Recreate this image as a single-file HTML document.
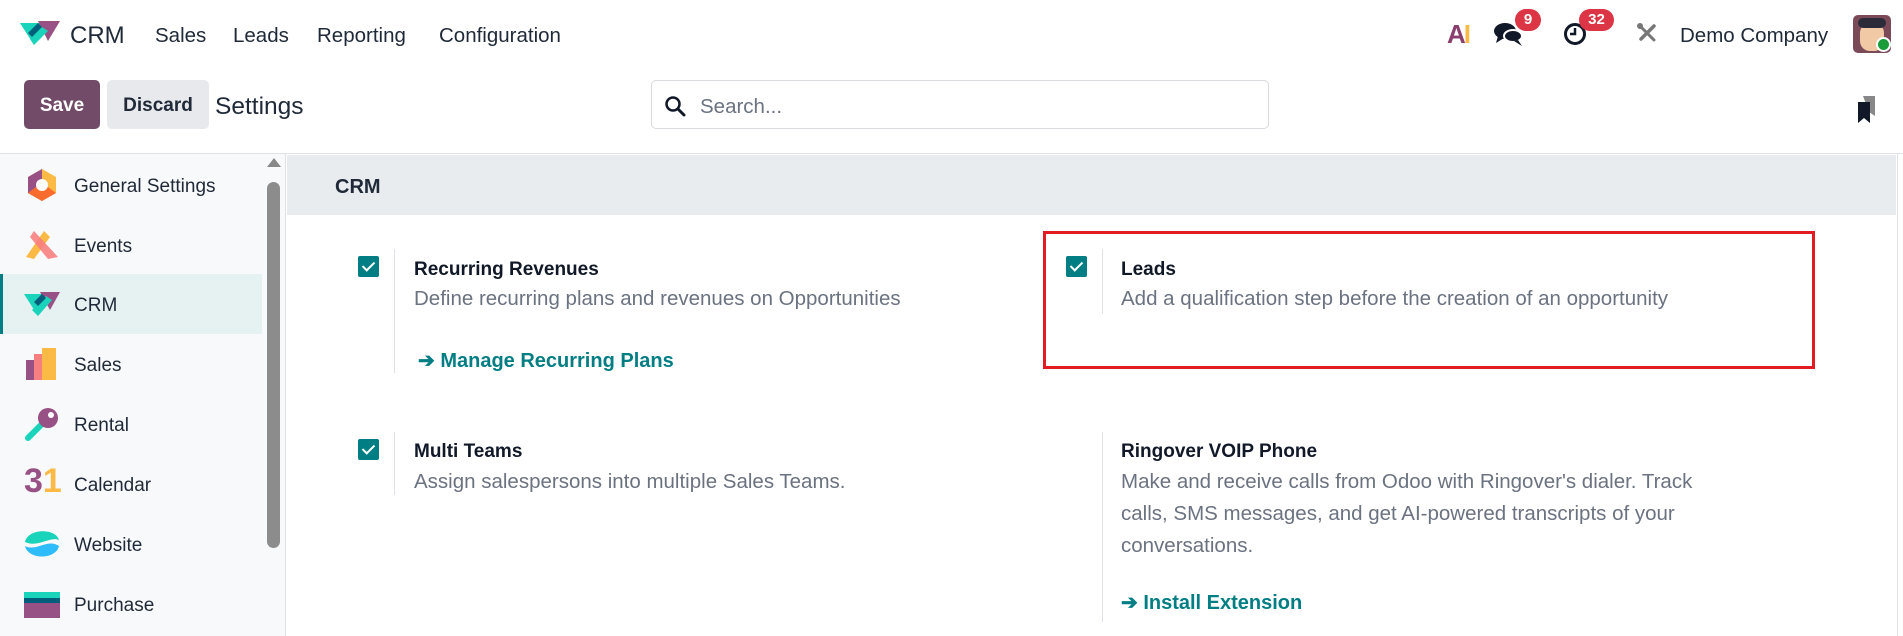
<!DOCTYPE html>
<html><head><meta charset="utf-8">
<style>
*{box-sizing:border-box;margin:0;padding:0}
body{width:1903px;height:636px;overflow:hidden;background:#fff;font-family:"Liberation Sans",sans-serif;color:#212529;position:relative}
.a{position:absolute;white-space:nowrap}
.nav{font-size:20.5px;color:#1f2937;top:24px}
.side{position:absolute;left:0;top:154px;width:286px;height:482px;background:#f8f9fa;border-right:1px solid #dee2e6}
.item{position:absolute;left:0;width:262px;height:60px;font-size:19px;color:#1f2937}
.item span{position:absolute;left:74px;top:21px}
.item svg{position:absolute;left:24px;top:12px}
.cb{position:absolute;width:21px;height:21px;background:#017e84;border-radius:2px}
.cb:after{content:"";position:absolute;left:7px;top:3px;width:5px;height:10px;border:solid #fff;border-width:0 2.5px 2.5px 0;transform:rotate(45deg)}
.vl{position:absolute;width:1px;background:#dee2e6}
.t{position:absolute;font-size:19px;font-weight:bold;color:#111827;white-space:nowrap}
.d{position:absolute;font-size:20.5px;color:#6b7280;white-space:nowrap;line-height:32px}
.lk{position:absolute;font-size:20px;font-weight:bold;color:#017e84;white-space:nowrap}
.badge{position:absolute;background:#dc3545;color:#fff;font-size:15px;font-weight:bold;border-radius:11px;height:22px;line-height:22px;text-align:center}
</style></head><body>
<svg class="a" style="left:20px;top:19px" width="40" height="30" viewBox="0 0 40 30">
<path d="M0 4 L26 4 L14 26 Z" fill="#1ad3bb"/><path d="M18 2 L40 2 L28 22 Z" fill="#985184"/><path d="M14 26 L28 12 L22 8 L10 20Z" fill="#1ad3bb"/><path d="M8 14 L18 4 L22 8 L12 18Z" fill="#005e7a"/></svg>
<div class="a" style="left:70px;top:22px;font-size:24px;color:#1f2937">CRM</div>
<div class="a nav" style="left:155px">Sales</div>
<div class="a nav" style="left:233px">Leads</div>
<div class="a nav" style="left:317px">Reporting</div>
<div class="a nav" style="left:439px">Configuration</div>
<div class="a" style="left:1447px;top:19px;font-size:26px;font-weight:bold;letter-spacing:-2px"><span style="color:#8a3f6f">A</span><span style="color:#fbb945">I</span></div>
<svg class="a" style="left:1494px;top:21px" width="30" height="26" viewBox="0 0 30 26"><ellipse cx="11" cy="10" rx="11" ry="8" fill="#111827"/><path d="M4 15 L2 22 L10 17Z" fill="#111827"/><ellipse cx="19" cy="15" rx="9" ry="6" fill="#111827" stroke="#fff" stroke-width="2"/><path d="M24 19 L28 25 L20 20Z" fill="#111827"/></svg>
<div class="badge" style="left:1515px;top:9px;width:26px">9</div>
<svg class="a" style="left:1563px;top:22px" width="24" height="24" viewBox="0 0 24 24"><circle cx="12" cy="12" r="9.5" fill="none" stroke="#111827" stroke-width="3"/><path d="M12 6 V12 H7" fill="none" stroke="#111827" stroke-width="2.5"/></svg>
<div class="badge" style="left:1579px;top:9px;width:35px">32</div>
<svg class="a" style="left:1636px;top:22px" width="22" height="22" viewBox="0 0 22 22"><path d="M4 4 L18 18" stroke="#777" stroke-width="3" stroke-linecap="round"/><path d="M18 4 L5 17" stroke="#777" stroke-width="3.5" stroke-linecap="round"/><circle cx="4" cy="4" r="3" fill="#777"/></svg>
<div class="a" style="left:1680px;top:24px;font-size:20.5px;color:#1f2937">Demo Company</div>
<div class="a" style="left:1853px;top:15px;width:38px;height:38px;background:#7b4a58;border-radius:5px;overflow:hidden"><div style="position:absolute;left:7px;top:8px;width:24px;height:28px;background:#f1c9a5;border-radius:10px"></div><div style="position:absolute;left:5px;top:3px;width:28px;height:10px;background:#2b2b3a;border-radius:6px"></div></div>
<div class="a" style="left:1876px;top:37px;width:15px;height:15px;background:#1a9c3b;border-radius:50%;border:2px solid #fff"></div>
<div class="a" style="left:24px;top:80px;width:76px;height:49px;background:#714b67;border-radius:5px;color:#fff;font-weight:bold;font-size:19px;text-align:center;line-height:51px">Save</div>
<div class="a" style="left:107px;top:80px;width:102px;height:49px;background:#e7e9ed;border-radius:5px;color:#1f2937;font-weight:bold;font-size:19px;text-align:center;line-height:51px">Discard</div>
<div class="a" style="left:215px;top:93px;font-size:24.5px;color:#1f2937">Settings</div>
<div class="a" style="left:651px;top:80px;width:618px;height:49px;border:1px solid #d8dadd;border-radius:5px"></div>
<svg class="a" style="left:664px;top:95px" width="22" height="22" viewBox="0 0 22 22"><circle cx="9" cy="9" r="6.5" fill="none" stroke="#111827" stroke-width="2.5"/><path d="M14 14 L20 20" stroke="#111827" stroke-width="3" stroke-linecap="round"/></svg>
<div class="a" style="left:700px;top:95px;font-size:20.5px;color:#6b7280">Search...</div>
<svg class="a" style="left:1857px;top:96px" width="20" height="28" viewBox="0 0 20 28"><path d="M6 0 H18 V20 L12 16Z" fill="#888"/><path d="M1 6 H13 V27 L7 22 L1 27Z" fill="#111827"/></svg>
<div class="a" style="left:0;top:153px;width:1903px;height:1px;background:#dee2e6"></div>
<div class="side">
<div class="item" style="top:1px"><svg width="36" height="36" viewBox="0 0 36 36"><path d="M18 2 L32 10 V26 L18 34 L4 26 V10Z" fill="#fbb945"/><path d="M4 10 L18 2 V34 L4 26Z" fill="#985184"/><path d="M4 26 L18 34 L32 26 L24 20 H12Z" fill="#f96c2e"/><circle cx="18" cy="18" r="6" fill="#fff"/></svg><span>General Settings</span></div>
<div class="item" style="top:61px"><svg width="36" height="36" viewBox="0 0 36 36"><path d="M2 30 L20 4 L26 10 L10 32Z" fill="#fbb945"/><path d="M10 4 L34 30 L24 32 L6 10Z" fill="#f87f7f" opacity=".9"/></svg><span>Events</span></div>
<div class="item" style="top:120px;background:#e6f1f2;border-left:3px solid #017e84"><svg width="36" height="36" viewBox="0 0 36 36" style="left:21px"><path d="M0 8 L24 8 L14 30 Z" fill="#1ad3bb"/><path d="M16 6 L36 6 L26 24 Z" fill="#985184"/><path d="M14 30 L28 14 L22 10 L8 24Z" fill="#1ad3bb"/><path d="M10 16 L18 8 L22 12 L14 20Z" fill="#005e7a"/></svg><span style="left:71px">CRM</span></div>
<div class="item" style="top:180px"><svg width="36" height="36" viewBox="0 0 36 36"><rect x="2" y="14" width="14" height="20" fill="#985184"/><rect x="10" y="8" width="12" height="26" fill="#f87f7f"/><rect x="18" y="2" width="14" height="32" fill="#fbb945"/></svg><span>Sales</span></div>
<div class="item" style="top:240px"><svg width="36" height="36" viewBox="0 0 36 36"><path d="M4 32 L18 18" stroke="#1ad3bb" stroke-width="6" stroke-linecap="round"/><circle cx="24" cy="12" r="10" fill="#985184"/><circle cx="27" cy="9" r="3" fill="#fff"/></svg><span>Rental</span></div>
<div class="item" style="top:300px"><span style="left:24px;top:8px;font-size:34px;font-weight:bold;color:#985184">3<span style="position:static;color:#fbb945">1</span></span><span>Calendar</span></div>
<div class="item" style="top:360px"><svg width="36" height="36" viewBox="0 0 36 36"><path d="M1 16 C4 2 32 2 35 14 C26 10 14 22 1 16Z" fill="#1ad3bb"/><path d="M1 20 C12 26 24 12 35 20 C32 34 4 34 1 20Z" fill="#2ebcfa"/></svg><span>Website</span></div>
<div class="item" style="top:420px"><svg width="36" height="36" viewBox="0 0 36 36"><rect x="0" y="6" width="36" height="26" fill="#985184"/><rect x="0" y="6" width="36" height="6" fill="#1ad3bb"/><rect x="0" y="12" width="36" height="5" fill="#005e7a"/></svg><span>Purchase</span></div>
<div style="position:absolute;left:267px;top:4px;width:0;height:0;border-left:7px solid transparent;border-right:7px solid transparent;border-bottom:9px solid #888"></div>
<div style="position:absolute;left:267px;top:28px;width:13px;height:366px;background:#8c8c8c;border-radius:7px"></div>
</div>
<div class="a" style="left:287px;top:155px;width:1609px;height:60px;background:#e9ecef"></div>
<div class="a" style="left:335px;top:176px;font-size:20px;font-weight:bold;color:#1f2937">CRM</div>
<div class="a" style="left:1897px;top:154px;width:6px;height:482px;background:#fff;border-left:1px solid #dee2e6"></div>

<div class="cb" style="left:358px;top:256px"></div>
<div class="vl" style="left:394px;top:249px;height:124px"></div>
<div class="t" style="left:414px;top:259px">Recurring Revenues</div>
<div class="d" style="left:414px;top:283px">Define recurring plans and revenues on Opportunities</div>
<div class="lk" style="left:418px;top:348px">➔ Manage Recurring Plans</div>

<div class="cb" style="left:1066px;top:256px"></div>
<div class="vl" style="left:1102px;top:249px;height:65px"></div>
<div class="t" style="left:1121px;top:259px">Leads</div>
<div class="d" style="left:1121px;top:283px">Add a qualification step before the creation of an opportunity</div>
<div class="a" style="left:1043px;top:231px;width:772px;height:138px;border:3px solid #e31b23"></div>

<div class="cb" style="left:358px;top:439px"></div>
<div class="vl" style="left:394px;top:432px;height:63px"></div>
<div class="t" style="left:414px;top:441px">Multi Teams</div>
<div class="d" style="left:414px;top:466px">Assign salespersons into multiple Sales Teams.</div>

<div class="vl" style="left:1102px;top:432px;height:190px"></div>
<div class="t" style="left:1121px;top:441px">Ringover VOIP Phone</div>
<div class="d" style="left:1121px;top:466px">Make and receive calls from Odoo with Ringover's dialer. Track<br>calls, SMS messages, and get AI-powered transcripts of your<br>conversations.</div>
<div class="lk" style="left:1121px;top:590px">➔ Install Extension</div>
</body></html>
